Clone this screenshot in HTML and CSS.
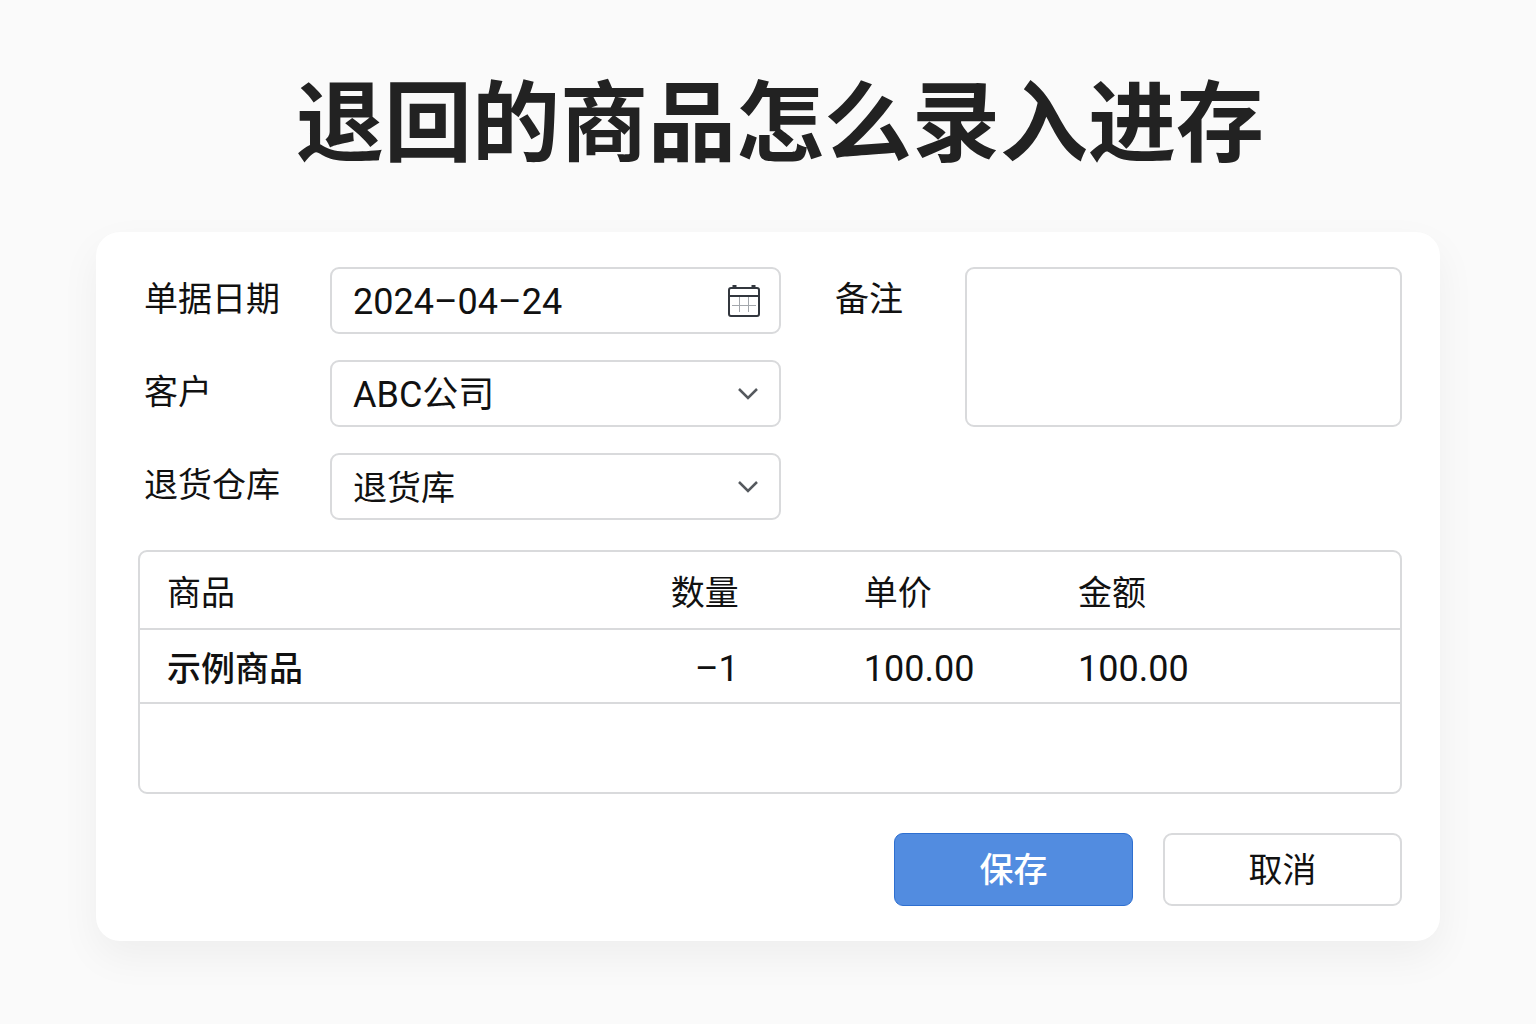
FILE: index.html
```html
<!DOCTYPE html>
<html lang="zh-CN">
<head>
  <meta charset="utf-8">
  <meta name="viewport" content="width=device-width, initial-scale=1">
  <title>退回的商品怎么录入进存</title>
  <link rel="stylesheet" href="styles.css">
</head>
<body>
  <main class="page">
    <h1 class="title">退回的商品怎么录入进存</h1>
    <form class="card">
      <div class="fields">
        <label class="label" for="date">单据日期</label>
        <div class="control">
          <input class="field field-large" id="date" type="text" value="2024–04–24">
          <button class="icon-button" type="button" aria-label="选择日期">
            <svg class="calendar" width="34" height="34" viewBox="0 0 34 34" fill="none" stroke="#32373e" stroke-width="2">
              <rect x="2" y="4" width="30" height="28" rx="2"/>
              <path d="M2 12h30"/>
              <path d="M5.500 2.500h4M24.500 2.500h4" stroke-width="3"/>
              <path d="M12.500 13v15M21.500 13v15M5 21.500h24" stroke="#a3a7ac" stroke-width="1"/>
            </svg>
          </button>
        </div>
        <label class="label label-note" for="note">备注</label>
        <textarea class="field note" id="note"></textarea>

        <label class="label label-start" for="customer">客户</label>
        <div class="control">
          <select class="field field-large" id="customer"><option>ABC公司</option></select>
          <svg class="chevron" width="22" height="14" viewBox="0 0 22 14" fill="none" stroke="#55595e" stroke-width="2.500"><path d="M2 2l9 9 9-9"/></svg>
        </div>

        <label class="label label-start" for="warehouse">退货仓库</label>
        <div class="control">
          <select class="field" id="warehouse"><option>退货库</option></select>
          <svg class="chevron" width="22" height="14" viewBox="0 0 22 14" fill="none" stroke="#55595e" stroke-width="2.500"><path d="M2 2l9 9 9-9"/></svg>
        </div>
      </div>

      <table class="items">
        <colgroup><col class="col-product"><col class="col-qty"><col class="col-price"><col></colgroup>
        <thead>
          <tr><th scope="col">商品</th><th class="qty" scope="col">数量</th><th scope="col">单价</th><th scope="col">金额</th></tr>
        </thead>
        <tbody>
          <tr><td class="product">示例商品</td><td class="qty number">–1</td><td class="number">100.00</td><td class="number">100.00</td></tr>
          <tr class="empty"><td colspan="4"></td></tr>
        </tbody>
      </table>

      <div class="actions">
        <button class="button primary" type="submit">保存</button>
        <button class="button" type="button">取消</button>
      </div>
    </form>
  </main>
</body>
</html>
```
FILE: styles.css
```css
* {
  box-sizing: border-box;
}

body {
  margin: 0;
  background: #fafafa;
  color: #111;
  font-family: Roboto, "Noto Sans CJK SC", sans-serif;
  font-size: 34px;
  line-height: 48px;
}

.page {
  padding: 56px 96px 80px;
}

.title {
  margin: 0 0 56px;
  padding-left: 24px;
  color: #222;
  font-family: "Noto Sans CJK SC", sans-serif;
  font-size: 88px;
  font-weight: 700;
  line-height: 120px;
  text-align: center;
}

.card {
  padding: 35px 38px 35px 42px;
  border-radius: 24px;
  background: #fff;
  box-shadow: 0 16px 40px rgba(0, 0, 0, 0.05);
}

.fields {
  display: grid;
  grid-template-columns: 192px 451fr 184px 437fr;
  grid-auto-rows: 67px;
  row-gap: 26px;
}

.label {
  padding: 8px 0 0 6px;
}

.label-start {
  grid-column: 1;
}

.label-note {
  padding-left: 54px;
}

.control {
  display: grid;
  align-items: center;
}

.control > * {
  grid-area: 1 / 1;
}

.field {
  width: 100%;
  height: 100%;
  padding: 2px 21px 0;
  border: 2px solid #d9dadc;
  border-radius: 9px;
  background: #fff;
  color: inherit;
  font: inherit;
  appearance: none;
}

.field-large {
  font-size: 36px;
}

.note {
  display: block;
  grid-row: span 2;
  padding: 8px 21px;
  resize: none;
}

.icon-button {
  justify-self: end;
  margin-right: 20px;
  padding: 0;
  border: 0;
  background: none;
}

.calendar,
.chevron {
  display: block;
}

.chevron {
  justify-self: end;
  margin-right: 22px;
  pointer-events: none;
}

.items {
  width: 100%;
  margin-top: 30px;
  border: 2px solid #d9dadc;
  border-radius: 9px;
  border-spacing: 0;
  table-layout: fixed;
}

.col-product {
  width: 36.800%;
}

.col-qty {
  width: 18.500%;
}

.col-price {
  width: 17%;
}

.items th,
.items td {
  height: 74px;
  padding: 6px 0 0 27px;
  border-bottom: 2px solid #d9dadc;
  font-weight: 400;
  text-align: left;
}

.items th {
  height: 78px;
}

.items .empty td {
  height: 88px;
  border-bottom: 0;
}

.items .qty {
  padding-right: 98px;
  text-align: right;
}

.items .product {
  font-weight: 500;
}

.items .number {
  font-size: 36px;
}

.actions {
  display: flex;
  justify-content: flex-end;
  gap: 30px;
  margin-top: 39px;
}

.button {
  width: 239px;
  height: 73px;
  padding: 0;
  border: 2px solid #d9dadc;
  border-radius: 9px;
  background: #fff;
  color: inherit;
  font: inherit;
}

.primary {
  border: 1px solid #2e6fd0;
  background: #528ce0;
  color: #fff;
  font-weight: 500;
}
```
